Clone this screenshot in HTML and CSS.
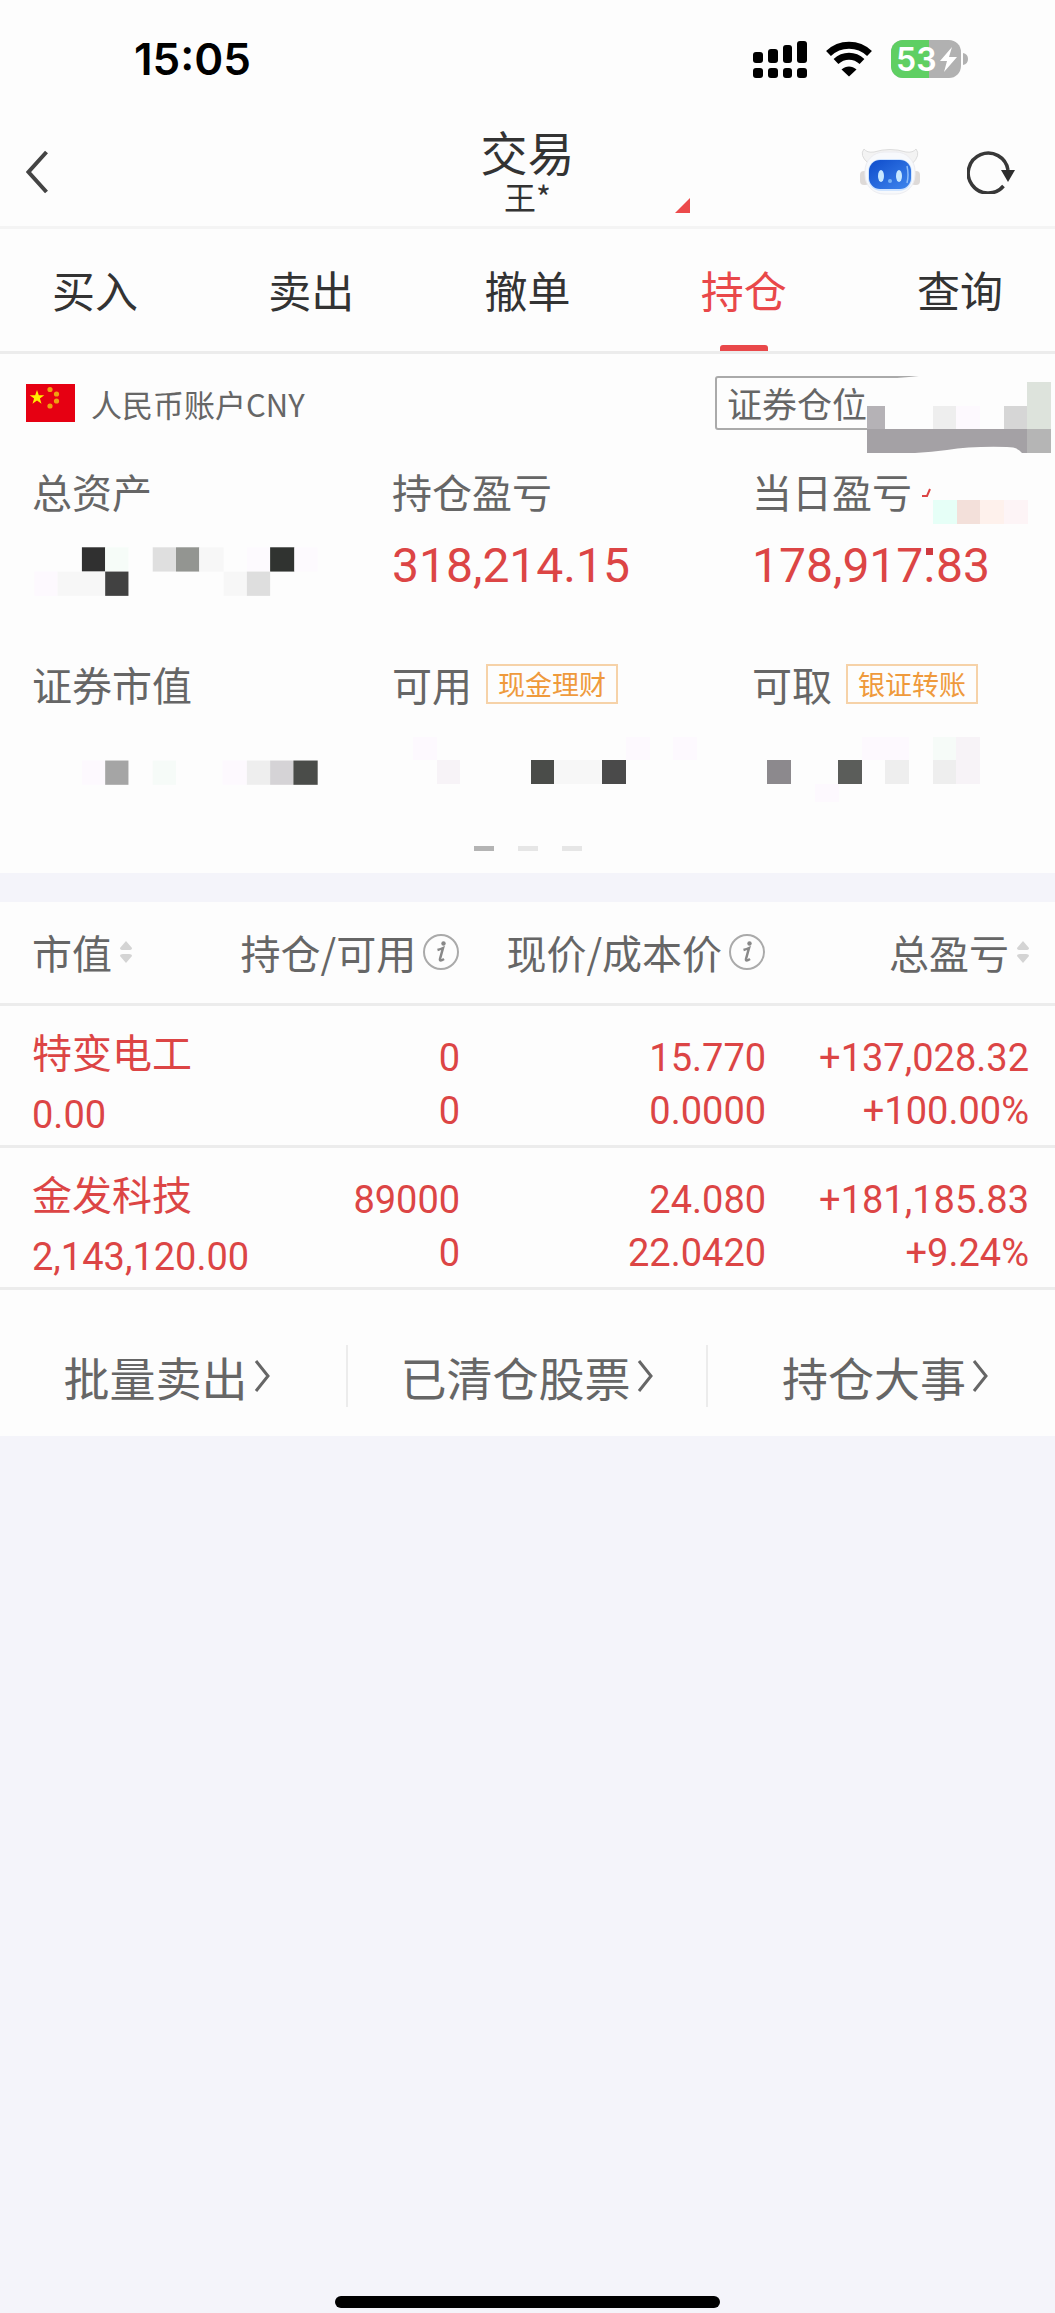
FILE: index.html
```html
<!DOCTYPE html>
<html lang="zh-CN">
<head>
<meta charset="utf-8">
<meta name="viewport" content="width=device-width, initial-scale=1">
<title>交易 - 持仓</title>
<link rel="stylesheet" href="styles.css">
</head>
<body>
<div class="status">
  <time class="clock">15:05</time>
  <div class="status-icons">
    <svg width="54" height="38" viewBox="0 0 54 38" aria-hidden="true">
      <rect x="0" y="12" width="10" height="11" rx="3"/><rect x="15" y="9" width="10" height="14" rx="3"/><rect x="30" y="5" width="9" height="18" rx="3"/><rect x="44" y="1" width="10" height="22" rx="3"/>
      <rect x="0" y="28" width="10" height="10" rx="3"/><rect x="15" y="28" width="10" height="10" rx="3"/><rect x="30" y="28" width="9" height="10" rx="3"/><rect x="44" y="28" width="10" height="10" rx="3"/>
    </svg>
    <svg width="48" height="36" viewBox="0 0 48 36" aria-hidden="true">
      <path d="M3.500 12.500C15 1.500 33 1.500 44.500 12.500" fill="none" stroke="#000" stroke-width="7"/>
      <path d="M11 20.500C18.500 13.500 29.500 13.500 37 20.500" fill="none" stroke="#000" stroke-width="7"/>
      <path d="M16.500 28.500C21 24.500 27 24.500 31.500 28.500L24 35.500Z"/>
    </svg>
    <svg width="77" height="38" viewBox="0 0 77 38" role="img" aria-label="电量 53%">
      <rect width="70" height="38" rx="12" fill="#b1b1b1"/>
      <path d="M12 0H38V38H12A12 12 0 0 1 0 26V12A12 12 0 0 1 12 0Z" fill="#5fcf63"/>
      <path d="M72 13Q77 14 77 19T72 25Z" fill="#b1b1b1"/>
      <text x="5" y="31" class="battery-level">53</text>
      <path d="M61 7L49 21H56L53 32L66 17H58Z" fill="#fff"/>
    </svg>
  </div>
</div>

<header class="header">
  <button class="icon-button back" aria-label="返回">
    <svg width="24" height="44" viewBox="0 0 24 44"><path d="M20.500 2L2.500 22L20.500 42" fill="none" stroke="#444" stroke-width="4"/></svg>
  </button>
  <div class="title">
    <h1>交易</h1>
    <p>王*</p>
    <svg class="corner" width="15" height="15" viewBox="0 0 15 15" aria-hidden="true"><path d="M15 0V15H0Z" fill="#ec4a4b"/></svg>
  </div>
  <div class="tools">
    <button class="icon-button" aria-label="智能助手">
      <svg width="62" height="50" viewBox="0 0 62 50">
        <defs><linearGradient id="face" x1="0" y1="0" x2="1" y2="1"><stop offset="0" stop-color="#0e4ccb"/><stop offset="1" stop-color="#3f86ee"/></linearGradient></defs>
        <path d="M9 16Q0 8 5 2Q8 6 15 5Q31 0 47 5Q54 6 57 2Q62 8 53 17" fill="#f3f3f3" stroke="#dcdcdc" stroke-width="1"/>
        <rect x="1" y="24" width="9" height="14" rx="4" fill="#dedad8"/><rect x="52" y="24" width="9" height="14" rx="4" fill="#dedad8"/>
        <rect x="6" y="5" width="50" height="42" rx="19" fill="#f7f9fc" stroke="#ececf0"/>
        <rect x="9" y="12" width="44" height="32" rx="13" fill="#cfe4ff"/>
        <rect x="10" y="13" width="42" height="29" rx="11" fill="url(#face)"/>
        <ellipse cx="22" cy="29" rx="3" ry="6" fill="#c8e8ff"/><ellipse cx="40" cy="29" rx="3" ry="6" fill="#c8e8ff"/>
        <circle cx="31" cy="34" r="2" fill="#79b4f5"/><path d="M48 19Q50 28 48 36" fill="none" stroke="#8dbcf8" stroke-width="1.500"/>
      </svg>
    </button>
    <button class="icon-button" aria-label="刷新">
      <svg width="48" height="44" viewBox="0 0 48 44"><path d="M36.500 36A20 20 0 1 1 41 20" fill="none" stroke="#383838" stroke-width="3.500"/><path d="M34 20H48L41 32Z" fill="#2d2d2d"/></svg>
    </button>
  </div>
</header>

<nav class="tabs">
  <a href="#buy">买入</a><a href="#sell">卖出</a><a href="#cancel">撤单</a><a href="#hold" class="active" aria-current="page">持仓</a><a href="#query">查询</a>
</nav>

<main>
  <section class="summary">
    <div class="account">
      <svg width="49" height="38" viewBox="0 0 49 38" role="img" aria-label="中国国旗">
        <rect width="49" height="38" fill="#e60012"/>
        <path d="M11 6L12.800 11.200H18.300L13.900 14.500L15.500 19.700L11 16.500L6.500 19.700L8.100 14.500L3.700 11.200H9.200Z" fill="#ffee00"/>
        <g fill="#f0a010"><circle cx="24" cy="5.500" r="2.600"/><circle cx="30.500" cy="10" r="2.600"/><circle cx="30.500" cy="17" r="2.600"/><circle cx="24" cy="22" r="2.600"/></g>
      </svg>
      <span class="account-name">人民币账户CNY</span>
      <button class="position">证券仓位</button>
      <svg class="position-mask" width="188" height="82" viewBox="0 0 188 82" aria-hidden="true">
        <path d="M0 8Q50 5 88 0H188V82H0Z" fill="#fdfdfd"/>
        <rect y="34" width="18" height="24" fill="#b5b2b6"/><rect x="66" y="34" width="23" height="24" fill="#eee"/><rect x="89" y="34" width="24" height="24" fill="#fdf9fe"/>
        <rect x="137" y="34" width="23" height="24" fill="#d6d6d6"/><rect x="160" y="10" width="24" height="48" fill="#dde3dc"/>
        <path d="M0 57H160V81H155Q151 75 140 75Q105 74 80 78Q65 80 48 81H0Z" fill="#a4a1a5"/><rect x="160" y="57" width="24" height="24" fill="#b5b5b5"/>
      </svg>
    </div>

    <div class="stats">
      <div class="stat">
        <span class="label">总资产</span>
        <svg class="hidden-value" width="286" height="85" viewBox="0 0 282 84" role="img" aria-label="已隐藏">
          <rect x="49" y="24" width="23" height="24" fill="#303030"/><rect x="72" y="24" width="23" height="24" fill="#f6fcf8"/><rect x="119" y="24" width="23" height="24" fill="#dfdfdf"/><rect x="142" y="24" width="23" height="24" fill="#939591"/><rect x="165" y="24" width="24" height="24" fill="#f7f7f7"/><rect x="212" y="24" width="23" height="24" fill="#fdfafe"/><rect x="235" y="24" width="24" height="24" fill="#303330"/><rect x="259" y="24" width="23" height="24" fill="#fdfafe"/>
          <rect x="2" y="48" width="23" height="24" fill="#fdf9fe"/><rect x="25" y="48" width="47" height="24" fill="#f7f7f7"/><rect x="72" y="48" width="23" height="24" fill="#414141"/><rect x="189" y="48" width="23" height="24" fill="#f7f7f7"/><rect x="212" y="48" width="23" height="24" fill="#dedede"/>
        </svg>
      </div>
      <div class="stat">
        <span class="label">持仓盈亏</span>
        <strong class="value">318,214.15</strong>
      </div>
      <div class="stat">
        <span class="label">当日盈亏</span>
        <strong class="value">178,917.83</strong>
        <svg class="smudge" width="276" height="100" viewBox="0 0 276 100" aria-hidden="true">
          <path d="M170 33H175L178 26" fill="none" stroke="#dc4545" stroke-width="2"/>
          <rect x="181" y="37" width="24" height="24" fill="#e6fff7"/><rect x="205" y="37" width="23" height="24" fill="#f3e0da"/><rect x="228" y="37" width="24" height="24" fill="#fef1ec"/><rect x="252" y="37" width="24" height="24" fill="#fdf4f6"/>
          <rect x="174" y="85" width="7" height="7" fill="#cf3a3f"/>
        </svg>
      </div>
      <div class="stat">
        <span class="label">证券市值</span>
        <svg class="hidden-value" width="286" height="85" viewBox="0 0 282 84" role="img" aria-label="已隐藏">
          <rect x="49" y="44" width="23" height="24" fill="#fdf9fe"/><rect x="72" y="44" width="23" height="24" fill="#a5a5a5"/><rect x="119" y="44" width="23" height="24" fill="#f6fbf8"/><rect x="188" y="44" width="24" height="24" fill="#fdf9fe"/><rect x="212" y="44" width="23" height="24" fill="#eee"/><rect x="235" y="44" width="23" height="24" fill="#d5d3d6"/><rect x="258" y="44" width="24" height="24" fill="#4a4c49"/>
        </svg>
      </div>
      <div class="stat">
        <span class="label">可用<button class="tag">现金理财</button></span>
        <svg class="hidden-value" width="306" height="84" viewBox="0 0 306 84" role="img" aria-label="已隐藏">
          <rect x="21" y="21" width="24" height="23" fill="#fdf9fe"/><rect x="45" y="44" width="23" height="24" fill="#f7f3f7"/><rect x="139" y="44" width="23" height="24" fill="#4a4c49"/><rect x="162" y="44" width="48" height="24" fill="#f7f7f7"/><rect x="210" y="44" width="24" height="24" fill="#4a4a4a"/><rect x="234" y="21" width="24" height="23" fill="#fdf9fe"/><rect x="281" y="21" width="24" height="23" fill="#fdf9fe"/>
        </svg>
      </div>
      <div class="stat">
        <span class="label">可取<button class="tag">银证转账</button></span>
        <svg class="hidden-value" width="230" height="86" viewBox="0 0 230 86" role="img" aria-label="已隐藏">
          <rect x="15" y="44" width="24" height="24" fill="#8c898d"/><rect x="63" y="68" width="24" height="18" fill="#fdf9fe"/><rect x="86" y="44" width="24" height="24" fill="#5b5d5a"/><rect x="110" y="21" width="47" height="23" fill="#fdf9fe"/><rect x="133" y="44" width="24" height="24" fill="#eee"/><rect x="181" y="21" width="23" height="23" fill="#f6fbf8"/><rect x="181" y="44" width="23" height="24" fill="#eee"/><rect x="204" y="21" width="24" height="47" fill="#f7f3f7"/>
        </svg>
      </div>
    </div>
    <div class="pager"><i class="current"></i><i></i><i></i></div>
  </section>

  <section class="holdings">
    <table>
      <colgroup><col class="c-value"><col class="c-amount"><col class="c-price"><col class="c-profit"></colgroup>
      <thead>
        <tr>
          <th scope="col"><span class="head">市值<svg class="sort" width="12" height="24" viewBox="0 0 12 24"><path d="M6 1L12 8Q12 10 9 10H3Q0 10 0 8ZM6 23L12 16Q12 14 9 14H3Q0 14 0 16Z" fill="#d4d4d4"/></svg></span></th>
          <th scope="col"><span class="head">持仓/可用<svg class="info" width="38" height="38" viewBox="0 0 38 38"><circle cx="19" cy="19" r="17" fill="none" stroke="#aaa" stroke-width="2"/><circle cx="21.500" cy="10.500" r="2.200" fill="#888"/><path d="M15.500 17Q19 16 21 15L18 26Q17.500 29 22 26" fill="none" stroke="#888" stroke-width="2.500"/></svg></span></th>
          <th scope="col"><span class="head">现价/成本价<svg class="info" width="38" height="38" viewBox="0 0 38 38"><circle cx="19" cy="19" r="17" fill="none" stroke="#aaa" stroke-width="2"/><circle cx="21.500" cy="10.500" r="2.200" fill="#888"/><path d="M15.500 17Q19 16 21 15L18 26Q17.500 29 22 26" fill="none" stroke="#888" stroke-width="2.500"/></svg></span></th>
          <th scope="col"><span class="head">总盈亏<svg class="sort" width="12" height="24" viewBox="0 0 12 24"><path d="M6 1L12 8Q12 10 9 10H3Q0 10 0 8ZM6 23L12 16Q12 14 9 14H3Q0 14 0 16Z" fill="#d4d4d4"/></svg></span></th>
        </tr>
      </thead>
      <tbody>
        <tr>
          <td><span class="name">特变电工</span><span>0.00</span></td>
          <td><span>0</span><span>0</span></td>
          <td><span>15.770</span><span>0.0000</span></td>
          <td><span>+137,028.32</span><span>+100.00%</span></td>
        </tr>
        <tr>
          <td><span class="name">金发科技</span><span>2,143,120.00</span></td>
          <td><span>89000</span><span>0</span></td>
          <td><span>24.080</span><span>22.0420</span></td>
          <td><span>+181,185.83</span><span>+9.24%</span></td>
        </tr>
      </tbody>
    </table>
    <div class="links">
      <a href="#batch">批量卖出<svg width="18" height="34" viewBox="0 0 18 34"><path d="M3 2L15 17L3 32" fill="none" stroke="#666" stroke-width="3"/></svg></a>
      <a href="#closed">已清仓股票<svg width="18" height="34" viewBox="0 0 18 34"><path d="M3 2L15 17L3 32" fill="none" stroke="#666" stroke-width="3"/></svg></a>
      <a href="#events">持仓大事<svg width="18" height="34" viewBox="0 0 18 34"><path d="M3 2L15 17L3 32" fill="none" stroke="#666" stroke-width="3"/></svg></a>
    </div>
  </section>
</main>
<div class="home-indicator"></div>
</body>
</html>
```
FILE: styles.css
```css
* { box-sizing: border-box; }

body {
  margin: 0;
  min-height: 100vh;
  display: flex;
  flex-direction: column;
  background: #f4f4fa;
  color: #666;
  font-family: "Noto Sans CJK SC", sans-serif;
}

button {
  margin: 0;
  padding: 0;
  border: 0;
  background: none;
  color: inherit;
  font: inherit;
}

a { color: inherit; text-decoration: none; }
svg { display: block; flex: none; }

/* Status bar */
.status {
  display: flex;
  align-items: center;
  justify-content: space-between;
  height: 118px;
  padding: 0 87px 0 134px;
  background: #fdfdfd;
}
.clock { font: 600 44px/52px Inter, sans-serif; color: #000; }
.status-icons { display: flex; align-items: center; gap: 18px; }
.battery-level { font: 600 32px Inter, sans-serif; fill: #fff; }

/* Title bar */
.header {
  display: grid;
  grid-template-columns: 1fr 324px 1fr;
  align-items: center;
  height: 111px;
  padding: 0 26px;
  background: #fdfdfd;
  border-bottom: 3px solid #f4f4f4;
}
.back { justify-self: start; }
.title {
  position: relative;
  color: #333;
  text-align: center;
}
.title h1 { margin: 0; font-size: 47px; font-weight: 400; line-height: 48px; }
.title p { margin: 0; font-size: 32px; line-height: 42px; }
.corner { position: absolute; right: 0; bottom: 4px; }
.tools {
  display: flex;
  align-items: center;
  justify-content: flex-end;
  gap: 46px;
  margin-right: 14px;
}

/* Tabs */
.tabs {
  display: flex;
  justify-content: space-between;
  height: 125px;
  padding: 0 52px;
  background: #fdfdfd;
  border-bottom: 3px solid #ececec;
  color: #333;
  font-size: 43px;
  line-height: 121px;
}
.tabs a { position: relative; }
.tabs .active { color: #e9484a; }
.tabs .active::after {
  content: "";
  position: absolute;
  left: 50%;
  bottom: 0;
  width: 48px;
  height: 6px;
  margin-left: -24px;
  border-radius: 3px 3px 0 0;
  background: #e9484a;
}

/* Account summary */
.summary { padding: 22px 0; background: #fdfdfd; }
.account {
  position: relative;
  display: flex;
  align-items: center;
  margin-bottom: 33px;
  padding: 0 26px;
}
.account-name { margin-left: 16px; font-size: 31px; }
.position {
  width: 314px;
  height: 54px;
  margin-left: auto;
  padding: 0 10px;
  border: 2px solid #aaa;
  border-radius: 3px;
  font-size: 35px;
  line-height: 50px;
  text-align: left;
}
.position-mask { position: absolute; top: -4px; right: 0; }

.stats {
  display: grid;
  grid-template-columns: 360fr 360fr 303fr;
  row-gap: 49px;
  padding-left: 32px;
}
.stat { position: relative; height: 144px; }
.label {
  display: flex;
  align-items: center;
  gap: 14px;
  padding-bottom: 4px;
  font-size: 40px;
  line-height: 56px;
}
.value {
  display: block;
  color: #dc4545;
  font: 400 48px/86px Roboto, sans-serif;
}
.tag {
  height: 40px;
  padding: 0 10px;
  border: 2px solid #f6d2a8;
  color: #ef9a3c;
  font-size: 27px;
  line-height: 36px;
}
.smudge { position: absolute; top: 0; left: 0; }
.hidden-value { overflow: visible; }

.pager {
  display: flex;
  justify-content: center;
  gap: 24px;
  margin-top: 46px;
}
.pager i { width: 20px; height: 5px; background: #e6e6e6; }
.pager .current { background: #b4b4b4; }

/* Holdings */
.holdings { margin-top: 29px; background: #fdfdfd; }
table { width: 100%; border-collapse: collapse; table-layout: fixed; }
.c-value { width: 22%; }
.c-amount { width: 22%; }
.c-price { width: 29%; }
.c-profit { width: 27%; }
th, td { padding: 0 4px 0 0; text-align: right; white-space: nowrap; }
th:first-child, td:first-child { padding-left: 32px; text-align: left; }
th:last-child, td:last-child { padding-right: 26px; }
thead tr { height: 102px; border-bottom: 3px solid #ececec; }
th { font-size: 40px; font-weight: 400; }
.head { display: inline-flex; align-items: center; }
.sort { margin-left: 8px; }
.info { margin-left: 6px; }

td {
  padding-top: 26px;
  padding-bottom: 7px;
  color: #dc4545;
  font: 400 38px/53px Roboto, sans-serif;
  vertical-align: top;
}
td span { display: block; }
td:first-child { padding-top: 15px; padding-bottom: 0; line-height: 60px; }
td .name {
  margin-bottom: 4px;
  font-family: "Noto Sans CJK SC", sans-serif;
  font-size: 40px;
}
tbody tr { border-bottom: 3px solid #ececec; }

.links {
  display: grid;
  grid-template-columns: 346fr 360fr 349fr;
  padding: 55px 0 29px;
  font-size: 46px;
  line-height: 62px;
}
.links a {
  display: flex;
  align-items: center;
  justify-content: center;
  gap: 5px;
  white-space: nowrap;
}
.links a:first-child { padding-right: 12px; }
.links a:last-child { padding-left: 8px; }
.links a + a { border-left: 2px solid #ececec; }

.home-indicator {
  width: 385px;
  height: 12px;
  margin: auto auto 5px;
  border-radius: 6px;
  background: #000;
}
```
